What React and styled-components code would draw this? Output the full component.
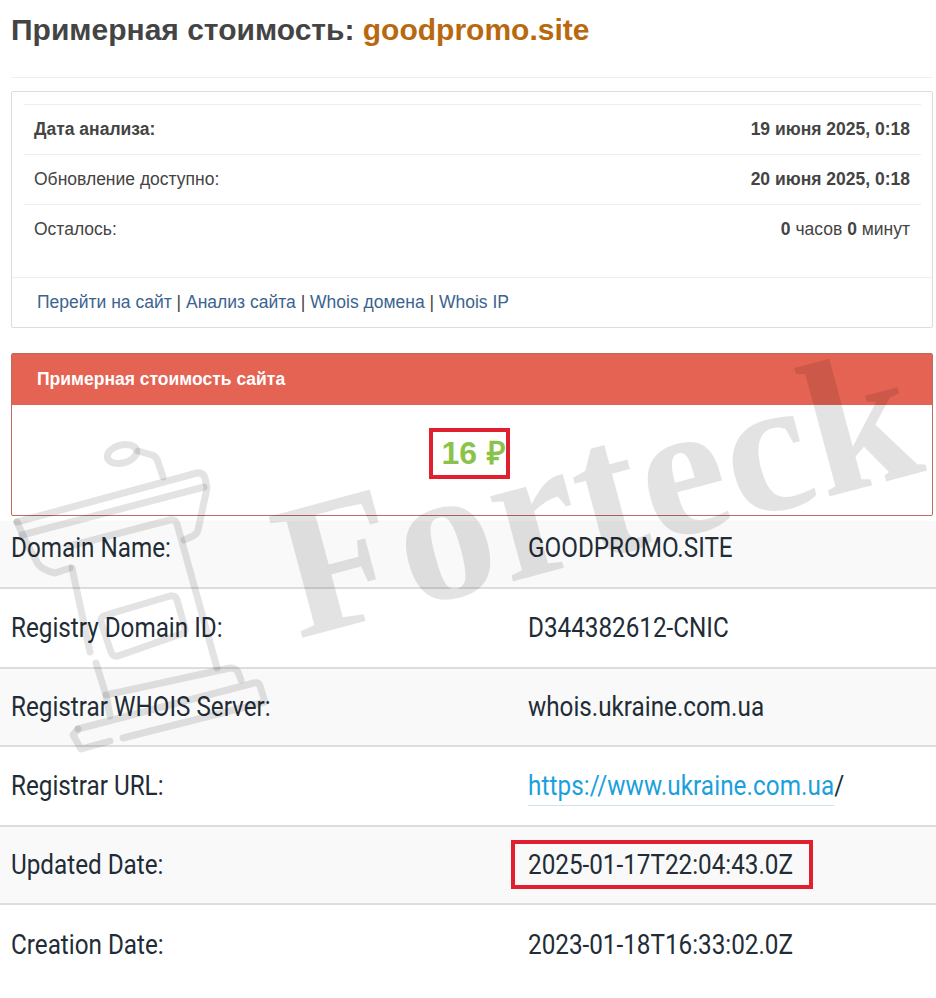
import React from 'react';
import styled, { createGlobalStyle } from 'styled-components';

const GlobalStyle = createGlobalStyle`
  html, body {
    margin: 0;
    padding: 0;
    background: #fff;
    font-family: "Liberation Sans", Arial, sans-serif;
    color: #444;
  }
`;

const Page = styled.div`
  position: relative;
  width: 936px;
  height: 998px;
  overflow: hidden;
`;

const Top = styled.div`
  padding: 0 3px 0 11px;
`;

const Title = styled.h2`
  margin: 0;
  height: 78px;
  box-sizing: border-box;
  padding-top: 13px;
  font-size: 30px;
  line-height: 33px;
  font-weight: 700;
  color: #444;
  border-bottom: 1px solid #eee;
`;

const Domain = styled.span`
  color: #b8690f;
`;

const InfoCard = styled.div`
  margin-top: 13px;
  height: 237px;
  box-sizing: border-box;
  border: 1px solid #ddd;
  border-radius: 2px;
  display: flex;
  flex-direction: column;
`;

const InfoRows = styled.div`
  flex: 1;
  padding: 12px 11px 0 12px;
`;

const InfoRow = styled.div`
  height: 50px;
  box-sizing: border-box;
  padding: 0 11px 1px 10px;
  display: flex;
  justify-content: space-between;
  align-items: center;
  border-top: 1px solid #eee;
  font-size: 17.5px;
  color: #444;
`;

const Label = styled.span`
  font-weight: ${(p) => (p.$bold ? 700 : 400)};
`;

const CardLinks = styled.div`
  height: 50px;
  box-sizing: border-box;
  padding: 14px 0 0 25px;
  border-top: 1px solid #eee;
  font-size: 17.5px;
  line-height: 20px;
  color: #444;
`;

const CardLink = styled.a`
  color: #3b6390;
  text-decoration: none;
`;

const PricePanel = styled.div`
  margin-top: 25px;
  height: 163px;
  box-sizing: border-box;
  border: 1px solid #bf6a60;
  border-radius: 2px;
  display: flex;
  flex-direction: column;
`;

const PanelHead = styled.div`
  height: 51px;
  box-sizing: border-box;
  padding: 0 0 0 25px;
  display: flex;
  align-items: center;
  background: #e56353;
  color: #fff;
  font-size: 17.5px;
  font-weight: 700;
`;

const PanelBody = styled.div`
  padding-top: 23px;
  display: flex;
  justify-content: center;
`;

const Price = styled.div`
  width: 81px;
  height: 51px;
  box-sizing: border-box;
  margin-right: 6px;
  padding: 0 0 4px 9px;
  border: 4px solid #e0202e;
  display: flex;
  align-items: center;
  color: #8bc34a;
  font-size: 32px;
  font-weight: 700;
  word-spacing: 1px;
  white-space: nowrap;
`;

const Whois = styled.div`
  margin-top: 5px;
`;

const WhoisRow = styled.div`
  height: ${(p) => p.$h}px;
  box-sizing: border-box;
  display: grid;
  grid-template-columns: 517px 1fr;
  align-items: center;
  padding: 0 0 ${(p) => p.$pb}px 11px;
  background: ${(p) => (p.$alt ? '#f9f9f9' : '#fff')};
  border-bottom: ${(p) => (p.$last ? 'none' : '2px solid #ddd')};
  font-family: Roboto, sans-serif;
  font-size: 28px;
  color: #222c36;
`;

const WhoisText = styled.div`
  display: inline-block;
  white-space: nowrap;
  transform: scaleX(0.866);
  transform-origin: left center;
`;

const WhoisLink = styled.a`
  color: #1aa0dc;
  text-decoration: none;
  letter-spacing: 0.1px;
  border-bottom: 1px solid #cfe3ef;
  padding-bottom: 3px;
`;

const Slash = styled.span`
  color: #222c36;
`;

const Marked = styled.div`
  position: relative;
`;

const MarkBox = styled.div`
  position: absolute;
  left: -17px;
  top: 50%;
  width: 302px;
  height: 49px;
  margin-top: -24px;
  box-sizing: border-box;
  border: 4px solid #e0202e;
`;

const Watermark = styled.svg`
  position: absolute;
  left: 0;
  top: 0;
  pointer-events: none;
`;

const rows = [
  { label: 'Domain Name:', value: 'GOODPROMO.SITE', h: 68, alt: true, pb: 13 },
  { label: 'Registry Domain ID:', value: 'D344382612-CNIC', h: 80, pb: 2 },
  { label: 'Registrar WHOIS Server:', value: 'whois.ukraine.com.ua', h: 78, alt: true, pb: 2 },
  { label: 'Registrar URL:', link: 'https://www.ukraine.com.ua', h: 80, pb: 2 },
  { label: 'Updated Date:', value: '2025-01-17T22:04:43.0Z', h: 78, alt: true, marked: true, pb: 2 },
  { label: 'Creation Date:', value: '2023-01-18T16:33:02.0Z', h: 80, last: true, pb: 2 },
];

const App = () => {
  return (
    <Page>
      <GlobalStyle />
      <Top>
        <Title>
          Примерная стоимость: <Domain>goodpromo.site</Domain>
        </Title>
        <InfoCard>
          <InfoRows>
            <InfoRow>
              <Label $bold>Дата анализа:</Label>
              <Label $bold>19 июня 2025, 0:18</Label>
            </InfoRow>
            <InfoRow>
              <Label>Обновление доступно:</Label>
              <Label $bold>20 июня 2025, 0:18</Label>
            </InfoRow>
            <InfoRow>
              <Label>Осталось:</Label>
              <span>
                <Label $bold>0</Label> часов <Label $bold>0</Label> минут
              </span>
            </InfoRow>
          </InfoRows>
          <CardLinks>
            <CardLink href="#">Перейти на сайт</CardLink> | <CardLink href="#">Анализ сайта</CardLink> |{' '}
            <CardLink href="#">Whois домена</CardLink> | <CardLink href="#">Whois IP</CardLink>
          </CardLinks>
        </InfoCard>
        <PricePanel>
          <PanelHead>Примерная стоимость сайта</PanelHead>
          <PanelBody>
            <Price>16 ₽</Price>
          </PanelBody>
        </PricePanel>
      </Top>
      <Whois>
        {rows.map((r) => (
          <WhoisRow key={r.label} $h={r.h} $alt={r.alt} $last={r.last} $pb={r.pb}>
            <WhoisText>{r.label}</WhoisText>
            {r.marked ? (
              <Marked>
                <WhoisText>{r.value}</WhoisText>
                <MarkBox />
              </Marked>
            ) : (
              <div>
                <WhoisText>
                  {r.link ? (
                    <>
                      <WhoisLink href="#">{r.link}</WhoisLink>
                      <Slash>/</Slash>
                    </>
                  ) : (
                    r.value
                  )}
                </WhoisText>
              </div>
            )}
          </WhoisRow>
        ))}
      </Whois>
      <Watermark width="936" height="998" viewBox="0 0 936 998">
        <text
          x="0"
          y="0"
          transform="translate(298 639) rotate(-15)"
          fontFamily='"Liberation Serif", serif'
          fontWeight="700"
          fontSize="192"
          letterSpacing="2"
          fill="#000"
          fillOpacity="0.11"
        >
          Forteck
        </text>
        <g fill="none" stroke="#000" strokeOpacity="0.11" strokeWidth="7" strokeLinejoin="round" strokeLinecap="round">
          <ellipse cx="122" cy="454" rx="15" ry="9" transform="rotate(-15 122 454)" />
          <path d="M138 451 L152 455 Q157 457 158 462 L163 477" />
          <path d="M17 522 L197 473 Q203 472 205 478 L207 488 L198 530 Q197 534 193 536 L184 540" />
          <path d="M17 522 L25 540 L38 564 Q42 570 55 573 L70 568" />
          <path d="M22 535 L204 487" />
          <path d="M70 546 L170 520 Q175 519 177 524 L217 668" />
          <path d="M72 568 L90 652" />
          <path d="M106 615 L170 596 Q175 595 177 600 L185 628 Q186 633 181 634 L118 656 Q113 657 111 652 L101 622 Q100 617 106 615 Z" />
          <path d="M96 663 L106 695 L230 668 Q236 668 238 672 L241 680" />
          <path d="M106 695 L110 716" />
          <path d="M78 729 L254 683 Q259 682 260 686 L265 702 L123 738" />
          <path d="M78 729 L73 735 L81 749 L110 741" />
        </g>
      </Watermark>
    </Page>
  );
};

export default App;
